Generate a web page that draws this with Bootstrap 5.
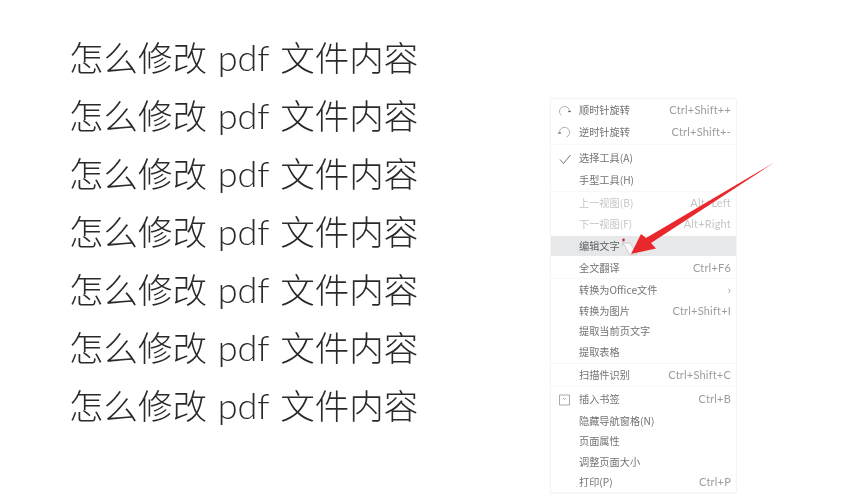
<!DOCTYPE html>
<html lang="zh">
<head>
<meta charset="utf-8">
<title>怎么修改 pdf 文件内容</title>
<link href="https://cdn.jsdelivr.net/npm/bootstrap@5.3.0/dist/css/bootstrap.min.css" rel="stylesheet">
<style>
html,body{height:500px;overflow:hidden;background:#fff}
body{font-family:"Noto Sans CJK SC","Liberation Sans",sans-serif}
.stage{width:852px;height:500px;position:relative}
.headline-col{padding:27px 0 0 69px;width:550px;flex:none}
.headline{font-size:34.5px;line-height:58px;height:58px;font-weight:300;color:#2a2a2a;white-space:nowrap;filter:blur(.3px)}
.headline .lat{font-family:"Lato","Liberation Sans",sans-serif;font-weight:300;font-size:36px;margin:0 3px}
.ctx{width:187px;margin-top:98px;height:395px;border:1px solid #f5f5f5;border-radius:0;box-shadow:0 1px 2px rgba(0,0,0,.03);display:block;position:static;padding:1px 0 0;font-size:10.2px;filter:blur(.45px)}
.ctx-row{display:flex;align-items:center;justify-content:space-between;height:20px;padding:0 5px 0 28px;color:#737373;position:relative;white-space:nowrap}
.ctx-row .keys{color:#9c9c9c;font-family:"Lato","Liberation Sans",sans-serif;font-size:11px;letter-spacing:.2px}
.ctx-row.off,.ctx-row.off .keys{color:#c6c6c6}
.ctx-row.hot{background:#e6e8ea;color:#5f5f5f}
.ctx-sep{height:1px;background:#f8f8f8}
.ctx-row svg.ic{position:absolute;left:6px;top:3px}
.step1{margin-top:1px}
.step2{margin-top:2px}
.sep-a{margin:2px 0 3px}
.sep-b{margin:1px 0}
.sep-c{margin:0 0 1px}
.sep-d{margin:1px 0 2px}
.arrow{position:absolute;left:600px;top:155px;pointer-events:none;z-index:1100}
</style>
</head>
<body>
<div class="stage d-flex">
  <div class="headline-col">
    <div class="headline">怎么修改 <span class="lat">pdf</span> 文件内容</div>
    <div class="headline">怎么修改 <span class="lat">pdf</span> 文件内容</div>
    <div class="headline">怎么修改 <span class="lat">pdf</span> 文件内容</div>
    <div class="headline">怎么修改 <span class="lat">pdf</span> 文件内容</div>
    <div class="headline">怎么修改 <span class="lat">pdf</span> 文件内容</div>
    <div class="headline">怎么修改 <span class="lat">pdf</span> 文件内容</div>
    <div class="headline">怎么修改 <span class="lat">pdf</span> 文件内容</div>
  </div>
  <div class="dropdown-menu ctx">
    <div class="ctx-row"><svg class="ic" width="16" height="14" viewBox="0 0 16 14" fill="none" stroke="#b0b0b0" stroke-width="1"><path d="M4.500 12.500A5 5 0 1 1 12.500 8.500"/><path d="M11 8.500h3" stroke="#777" stroke-width="1.300"/></svg><span>顺时针旋转</span><span class="keys">Ctrl+Shift++</span></div>
    <div class="ctx-row step2"><svg class="ic" width="16" height="14" viewBox="0 0 16 14" fill="none" stroke="#b0b0b0" stroke-width="1"><path d="M9.500 12A5 5 0 1 0 2.500 7.500"/><path d="M1 8h3" stroke="#777" stroke-width="1.300"/></svg><span>逆时针旋转</span><span class="keys">Ctrl+Shift+-</span></div>
    <div class="ctx-sep sep-a"></div>
    <div class="ctx-row"><svg class="ic" width="16" height="14" viewBox="0 0 16 14" fill="none" stroke="#777" stroke-width="1"><path d="M3 8.500l3.500 4L13.500 4"/></svg><span>选择工具(A)</span></div>
    <div class="ctx-row step2"><span>手型工具(H)</span></div>
    <div class="ctx-sep sep-b"></div>
    <div class="ctx-row off"><span>上一视图(B)</span><span class="keys">Alt+Left</span></div>
    <div class="ctx-row off step1"><span>下一视图(F)</span><span class="keys">Alt+Right</span></div>
    <div class="ctx-row hot step2"><span>编辑文字</span></div>
    <div class="ctx-row step2"><span>全文翻译</span><span class="keys">Ctrl+F6</span></div>
    <div class="ctx-sep sep-c"></div>
    <div class="ctx-row"><span>转换为Office文件</span><span class="keys">›</span></div>
    <div class="ctx-row step1"><span>转换为图片</span><span class="keys">Ctrl+Shift+I</span></div>
    <div class="ctx-row"><span>提取当前页文字</span></div>
    <div class="ctx-row step1"><span>提取表格</span></div>
    <div class="ctx-sep sep-b"></div>
    <div class="ctx-row"><span>扫描件识别</span><span class="keys">Ctrl+Shift+C</span></div>
    <div class="ctx-sep sep-d"></div>
    <div class="ctx-row"><svg class="ic" width="16" height="14" viewBox="0 0 16 14" fill="none" stroke="#a0a0a0" stroke-width=".9"><path d="M2.500 3h10v10h-10z"/><path d="M6 6l1.500 1.500L9 6"/></svg><span>插入书签</span><span class="keys">Ctrl+B</span></div>
    <div class="ctx-row step2"><span>隐藏导航窗格(N)</span></div>
    <div class="ctx-row"><span>页面属性</span></div>
    <div class="ctx-row step1"><span>调整页面大小</span></div>
    <div class="ctx-row"><span>打印(P)</span><span class="keys">Ctrl+P</span></div>
  </div>
  <svg class="arrow" width="180" height="105" viewBox="600 155 180 105">
    <path d="M622 246l2-8" fill="none" stroke="#cfcfcf" stroke-width="1"/>
    <path d="M623 243l7 12 7-1-7-11z" fill="#fafafa" stroke="#c4c4c4" stroke-width=".8"/>
    <circle cx="623.500" cy="240" r="1.400" fill="#d8303a"/>
    <path d="M775 162L646 238 641 234 631 254 656 248.500 651 243Z" fill="#e9272c"/>
  </svg>
</div>
<script src="https://cdn.jsdelivr.net/npm/bootstrap@5.3.0/dist/js/bootstrap.bundle.min.js"></script>
</body>
</html>
